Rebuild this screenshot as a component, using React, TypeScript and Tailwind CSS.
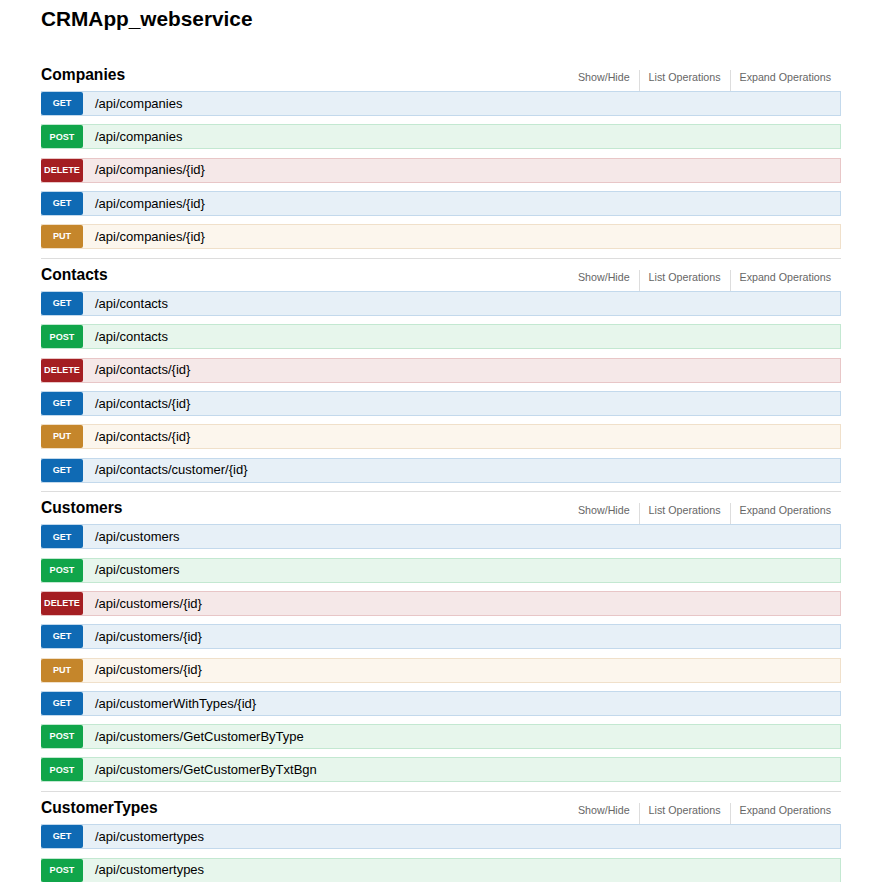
type Method = "GET" | "POST" | "DELETE" | "PUT";

type Endpoint = { method: Method; path: string };
type Resource = { name: string; endpoints: Endpoint[] };

// swagger-ui 2.x palette
const methodStyles: Record<Method, { row: string; badge: string }> = {
  GET: { row: "bg-[#e7f0f7] border-[#c3d9ec]", badge: "bg-[#0f6ab4]" },
  POST: { row: "bg-[#e7f6ec] border-[#c3e8d1]", badge: "bg-[#10a54a]" },
  DELETE: { row: "bg-[#f5e8e8] border-[#e8c6c7]", badge: "bg-[#a41e22]" },
  PUT: { row: "bg-[#fcf6ed] border-[#f0e0ca]", badge: "bg-[#c5862b]" },
};

const resources: Resource[] = [
  {
    name: "Companies",
    endpoints: [
      { method: "GET", path: "/api/companies" },
      { method: "POST", path: "/api/companies" },
      { method: "DELETE", path: "/api/companies/{id}" },
      { method: "GET", path: "/api/companies/{id}" },
      { method: "PUT", path: "/api/companies/{id}" },
    ],
  },
  {
    name: "Contacts",
    endpoints: [
      { method: "GET", path: "/api/contacts" },
      { method: "POST", path: "/api/contacts" },
      { method: "DELETE", path: "/api/contacts/{id}" },
      { method: "GET", path: "/api/contacts/{id}" },
      { method: "PUT", path: "/api/contacts/{id}" },
      { method: "GET", path: "/api/contacts/customer/{id}" },
    ],
  },
  {
    name: "Customers",
    endpoints: [
      { method: "GET", path: "/api/customers" },
      { method: "POST", path: "/api/customers" },
      { method: "DELETE", path: "/api/customers/{id}" },
      { method: "GET", path: "/api/customers/{id}" },
      { method: "PUT", path: "/api/customers/{id}" },
      { method: "GET", path: "/api/customerWithTypes/{id}" },
      { method: "POST", path: "/api/customers/GetCustomerByType" },
      { method: "POST", path: "/api/customers/GetCustomerByTxtBgn" },
    ],
  },
  {
    name: "CustomerTypes",
    endpoints: [
      { method: "GET", path: "/api/customertypes" },
      { method: "POST", path: "/api/customertypes" },
      { method: "DELETE", path: "/api/customertypes/{id}" },
      { method: "GET", path: "/api/customertypes/{id}" },
      { method: "PUT", path: "/api/customertypes/{id}" },
    ],
  },
];

function OperationRow({ endpoint }: { endpoint: Endpoint }) {
  const s = methodStyles[endpoint.method];
  return (
    <li className={`flex h-[25px] mb-[8.3px] border ${s.row}`}>
      <span
        className={`-ml-px w-[42px] shrink-0 flex items-center justify-center pt-px rounded-[2px] text-[9.1px] font-bold text-white uppercase ${s.badge}`}
      >
        {endpoint.method}
      </span>
      <span className="pl-[12px] flex items-center text-[13px] text-black">{endpoint.path}</span>
    </li>
  );
}

function ResourceSection({ resource }: { resource: Resource }) {
  return (
    <li className="border-b border-[#ddd]">
      {/* ── Heading ───────────────────────────────────────── */}
      <div className="h-[32.5px] flex justify-between">
        <h2 className="pt-[7px] text-[15.6px] leading-[18px] font-bold text-black">{resource.name}</h2>
        <ul className="mt-[11.5px] flex text-[10.7px] leading-[14px] text-[#666]">
          <li className="px-[9px] border-r border-[#ddd]">Show/Hide</li>
          <li className="px-[9px] border-r border-[#ddd]">List Operations</li>
          <li className="pl-[9px] pr-[10px]">Expand Operations</li>
        </ul>
      </div>

      {/* ── Operations ────────────────────────────────────── */}
      <ul>
        {resource.endpoints.map((e, i) => (
          <OperationRow key={i} endpoint={e} />
        ))}
      </ul>
    </li>
  );
}

export default function App() {
  return (
    <div className="min-h-screen bg-white font-['Liberation_Sans',Arial,sans-serif]">
      <div className="ml-[41px] w-[800px] pt-[7px]">
        <h1 className="text-[20.8px] leading-[23px] font-bold text-black">CRMApp_webservice</h1>

        <ul className="mt-[28.6px]">
          {resources.map((r) => (
            <ResourceSection key={r.name} resource={r} />
          ))}
        </ul>
      </div>
    </div>
  );
}
